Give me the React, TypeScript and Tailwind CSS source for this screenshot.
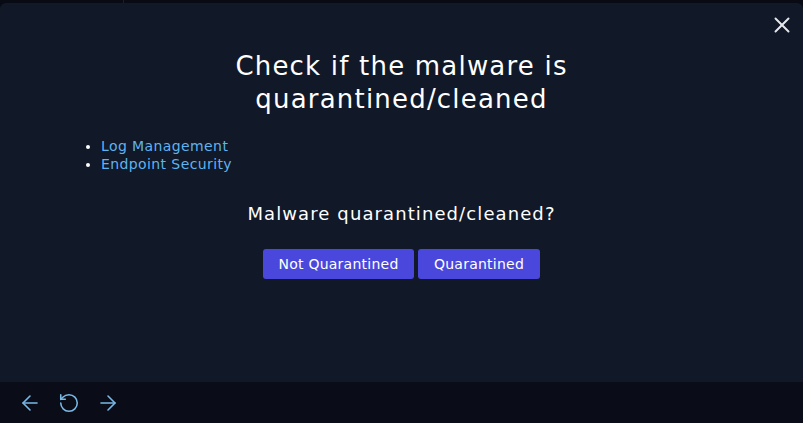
import React from "react";
import { ArrowLeft, ArrowRight, RotateCcw, X } from "lucide-react";

const font = { fontFamily: '"DejaVu Sans", "Open Sans", sans-serif' };

const App = () => {
  return (
    <div className="w-[803px] h-[423px] bg-[#080b14] flex flex-col overflow-hidden" style={font}>
      <div className="h-[3px] flex">
        <div className="w-[124px] border-r border-[#1a1f2c]" />
      </div>
      <main className="flex-1 bg-[#111827] rounded-t-[6px] relative flex flex-col">
        <button className="absolute right-[8px] top-[9px] text-[#e5e7eb]">
          <X size={26} strokeWidth={1.8} />
        </button>
        <h1 className="mt-[47px] text-center text-white text-[26px] leading-[33px] tracking-[1.2px] mx-auto w-[420px]">
          Check if the malware is quarantined/cleaned
        </h1>
        <ul className="mt-[21px] ml-[101px] list-disc text-[14px] leading-[18px] tracking-[0.4px] text-[#5eb3f0] marker:text-white">
          <li>Log Management</li>
          <li>Endpoint Security</li>
        </ul>
        <p className="mt-[29px] text-center text-white text-[18px] leading-[24px] tracking-[1.1px]">
          Malware quarantined/cleaned?
        </p>
        <div className="mt-[23px] flex justify-center gap-[4px]">
          <button className="w-[151px] h-[30px] rounded-[3px] bg-[#4a47dc] text-white text-[14px] tracking-[0.25px]">
            Not Quarantined
          </button>
          <button className="w-[122px] h-[30px] rounded-[3px] bg-[#4a47dc] text-white text-[14px] tracking-[0.25px]">
            Quarantined
          </button>
        </div>
      </main>
      <footer className="h-[41px] bg-[#0a0d17] flex items-center pl-[18px] gap-[16px] text-[#7ab8e6]">
        <ArrowLeft size={24} strokeWidth={1.6} />
        <RotateCcw size={22} strokeWidth={1.7} />
        <ArrowRight size={24} strokeWidth={1.6} />
      </footer>
    </div>
  );
};

export default App;
